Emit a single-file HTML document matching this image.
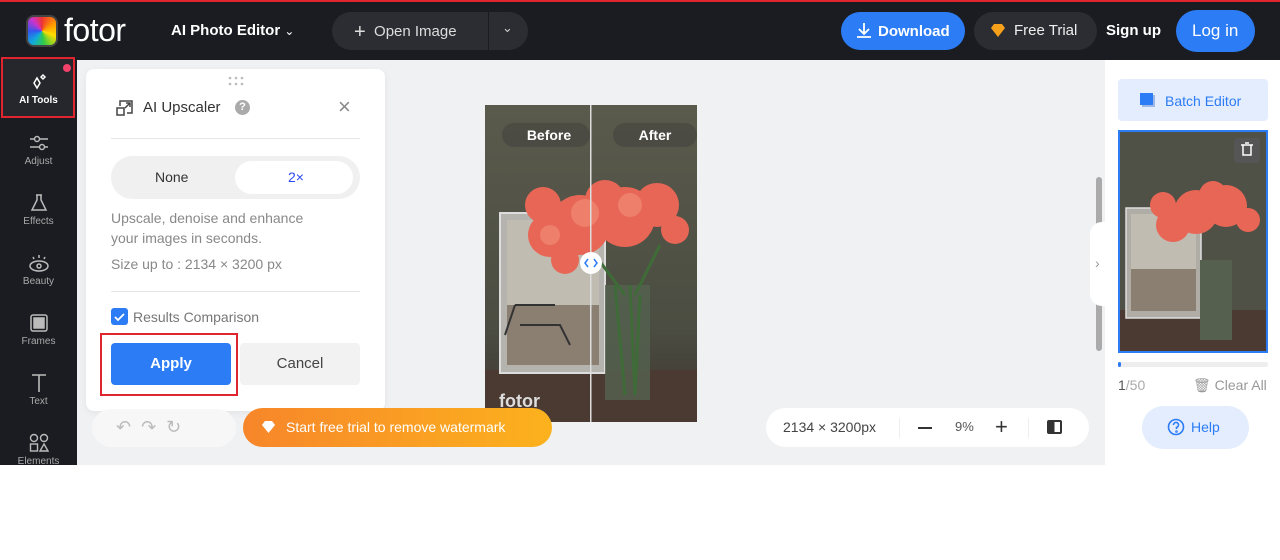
<!DOCTYPE html>
<html><head><meta charset="utf-8"><style>
*{margin:0;padding:0;box-sizing:border-box}
body{width:1280px;height:560px;background:#fff;font-family:"Liberation Sans",sans-serif;position:relative;overflow:hidden}
.a{position:absolute}
.top{left:0;top:0;width:1280px;height:60px;background:#1b1c21;border-top:2px solid #e0252e}
.side{left:0;top:60px;width:77px;height:405px;background:#1b1c21}
.canvas{left:77px;top:60px;width:1028px;height:405px;background:#f0f1f3}
.right{left:1105px;top:60px;width:175px;height:405px;background:#fff}
.w{color:#fff}
.si{position:absolute;left:0;width:77px;text-align:center;color:#aaa;font-size:10px}
.si svg{display:block;margin:0 auto 3px}
</style></head><body>
<div class="a top"></div>
<div class="a" style="left:26px;top:15px;width:32px;height:32px;border-radius:8px;background:conic-gradient(#e33 0deg,#f90 60deg,#fd0 110deg,#3c4 170deg,#1ad 220deg,#35e 270deg,#c3c 320deg,#e33 360deg);border:2px solid #444"></div>
<div class="a w" style="left:64px;top:12px;font-size:32px;letter-spacing:-0.5px">fotor</div>
<div class="a w" style="left:171px;top:22px;font-size:15px;font-weight:bold">AI Photo Editor <span style="font-weight:normal;font-size:12px">&#8964;</span></div>
<div class="a" style="left:332px;top:12px;width:196px;height:38px;border-radius:19px;background:#2c2d32"></div>
<div class="a" style="left:488px;top:12px;width:1px;height:38px;background:#1b1c21"></div>
<div class="a" style="left:354px;top:21px;color:#ddd;font-size:15px"><span style="font-size:20px;vertical-align:-2px">+</span>&nbsp; Open Image</div>
<div class="a" style="left:502px;top:20px;color:#ccc;font-size:13px">&#8964;</div>
<div class="a" style="left:841px;top:12px;width:124px;height:38px;border-radius:19px;background:#2c7cf6"></div>
<svg class="a" style="left:855px;top:21px" width="18" height="18" viewBox="0 0 18 18" fill="none" stroke="#fff" stroke-width="1.8"><path d="M9 2v11M4 8l5 5 5-5M2 16h14"/></svg>
<div class="a w" style="left:878px;top:23px;font-size:15px;font-weight:bold">Download</div>
<div class="a" style="left:974px;top:12px;width:123px;height:38px;border-radius:19px;background:#2c2d32"></div>
<svg class="a" style="left:990px;top:24px" width="16" height="14"><path d="M1 4L4 0h8l3 4-7 9z" fill="#f7a11a"/></svg>
<div class="a" style="left:1014px;top:22px;color:#eee;font-size:15px">Free Trial</div>
<div class="a w" style="left:1106px;top:22px;font-size:15px;font-weight:bold">Sign up</div>
<div class="a" style="left:1176px;top:10px;width:79px;height:42px;border-radius:21px;background:#2c7cf6"></div>
<div class="a w" style="left:1192px;top:21px;font-size:17px">Log in</div>

<div class="a side"></div>
<div class="a" style="left:1px;top:57px;width:74px;height:61px;border:2px solid #e0252e;background:#26272c"></div>
<div class="a" style="left:63px;top:64px;width:8px;height:8px;border-radius:50%;background:#f0426a"></div>
<div class="si" style="top:72px;color:#fff;font-weight:bold"><svg width="20" height="20" viewBox="0 0 20 20" fill="none" stroke="#fff" stroke-width="1.5"><path d="M8 6l3 5-3 5-3-5z"/><path d="M14 3l2 2-2 2-2-2z"/></svg>AI Tools</div>
<div class="si" style="top:133px"><svg width="20" height="20" fill="none" stroke="#bbb" stroke-width="1.5"><path d="M1 6h18M1 14h18"/><circle cx="8" cy="6" r="2.5" fill="#1b1c21"/><circle cx="13" cy="14" r="2.5" fill="#1b1c21"/></svg>Adjust</div>
<div class="si" style="top:193px"><svg width="20" height="20" fill="none" stroke="#bbb" stroke-width="1.5"><path d="M7 2h6M8 2v5L3 17h14L12 7V2"/></svg>Effects</div>
<div class="si" style="top:253px"><svg width="22" height="20" fill="none" stroke="#bbb" stroke-width="1.5"><ellipse cx="11" cy="13" rx="9" ry="5"/><circle cx="11" cy="13" r="2"/><path d="M11 2v3M5 4l1 2M17 4l-1 2"/></svg>Beauty</div>
<div class="si" style="top:313px"><svg width="20" height="20" fill="none" stroke="#bbb" stroke-width="1.5"><rect x="2" y="2" width="16" height="16" rx="2"/><rect x="5" y="5" width="10" height="10" fill="#bbb"/></svg>Frames</div>
<div class="si" style="top:373px"><svg width="20" height="20" fill="none" stroke="#bbb" stroke-width="1.6"><path d="M3 2h14M10 2v17"/></svg>Text</div>
<div class="si" style="top:433px"><svg width="20" height="20" fill="none" stroke="#bbb" stroke-width="1.4"><circle cx="5" cy="5" r="3.5"/><circle cx="15" cy="5" r="3.5"/><rect x="1.5" y="11" width="7" height="7"/><path d="M15 11l4 7h-8z"/></svg>Elements</div>

<div class="a canvas"></div>
<div class="a right"></div>

<svg class="a" style="left:485px;top:105px" width="212" height="317" viewBox="0 0 212 317">
<defs><linearGradient id="bg" x1="0" y1="0" x2="0" y2="1"><stop offset="0" stop-color="#5a5a4c"/><stop offset=".7" stop-color="#4b4d42"/><stop offset="1" stop-color="#3e3630"/></linearGradient></defs>
<rect width="212" height="317" fill="url(#bg)"/>
<rect x="0" y="265" width="212" height="52" fill="#4a3a32"/>
<rect x="15" y="108" width="105" height="160" fill="#b5b3ad" stroke="#ddd" stroke-width="2"/>
<rect x="22" y="115" width="92" height="85" fill="#c0bcb2"/>
<rect x="22" y="200" width="92" height="60" fill="#8b7f72"/>
<path d="M30 200h40M30 200l-10 30M35 220h40l10 20" stroke="#333" stroke-width="2" fill="none"/>
<rect x="120" y="180" width="45" height="115" fill="#55604f" opacity=".85"/>
<path d="M130 180l10 110M145 180l5 110M155 190l-5 100M110 150l30 40M175 140l-25 50" stroke="#3f6b38" stroke-width="3"/>
<g fill="#e86655"><circle cx="65" cy="130" r="22"/><circle cx="95" cy="120" r="30"/><circle cx="140" cy="112" r="30"/><circle cx="172" cy="100" r="22"/><circle cx="58" cy="100" r="18"/><circle cx="190" cy="125" r="14"/><circle cx="80" cy="155" r="14"/><circle cx="120" cy="95" r="20"/></g>
<g fill="#f08a75" opacity=".7"><circle cx="100" cy="108" r="14"/><circle cx="145" cy="100" r="12"/><circle cx="65" cy="130" r="10"/></g>
<rect x="17" y="18" width="88" height="24" rx="12" fill="#4a4a42" opacity=".9"/>
<rect x="128" y="18" width="84" height="24" rx="12" fill="#4a4a42" opacity=".9"/>
<text x="64" y="35" fill="#fff" font-size="14" font-weight="bold" text-anchor="middle" font-family="Liberation Sans">Before</text>
<text x="170" y="35" fill="#fff" font-size="14" font-weight="bold" text-anchor="middle" font-family="Liberation Sans">After</text>
<rect x="105" y="0" width="1.5" height="317" fill="#ddd"/>
<circle cx="106" cy="158" r="11" fill="#fff"/>
<path d="M103 154l-3 4 3 4M109 154l3 4-3 4" stroke="#2c7cf6" stroke-width="1.5" fill="none"/>
<text x="14" y="302" fill="#ddd" font-size="18" font-weight="bold" font-family="Liberation Sans">fotor</text>
</svg>

<div class="a" style="left:86px;top:69px;width:299px;height:342px;background:#fff;border-radius:8px;box-shadow:0 2px 8px rgba(0,0,0,.06)"></div>
<svg class="a" style="left:228px;top:76px" width="16" height="10" fill="#bbb"><circle cx="2" cy="2" r="1.3"/><circle cx="8" cy="2" r="1.3"/><circle cx="14" cy="2" r="1.3"/><circle cx="2" cy="8" r="1.3"/><circle cx="8" cy="8" r="1.3"/><circle cx="14" cy="8" r="1.3"/></svg>
<svg class="a" style="left:116px;top:99px" width="18" height="18" fill="none" stroke="#444" stroke-width="1.5"><rect x="1" y="9" width="7" height="7"/><path d="M4 7V2h12v12h-5M9 9l5-5M10 4h4v4"/></svg>
<div class="a" style="left:143px;top:99px;font-size:15px;color:#333">AI Upscaler</div>
<div class="a" style="left:235px;top:100px;width:15px;height:15px;border-radius:50%;background:#aaa;color:#fff;font-size:11px;font-weight:bold;text-align:center;line-height:15px">?</div>
<div class="a" style="left:338px;top:94px;color:#888;font-size:22px">&#215;</div>
<div class="a" style="left:111px;top:138px;width:249px;height:1px;background:#e5e5e5"></div>
<div class="a" style="left:111px;top:156px;width:249px;height:43px;border-radius:22px;background:#f0f0f0"></div>
<div class="a" style="left:235px;top:161px;width:118px;height:33px;border-radius:17px;background:#fff"></div>
<div class="a" style="left:155px;top:169px;font-size:14px;color:#333">None</div>
<div class="a" style="left:288px;top:169px;font-size:14px;color:#2c48f0">2×</div>
<div class="a" style="left:111px;top:208px;font-size:14px;color:#888;line-height:20px">Upscale, denoise and enhance<br>your images in seconds.</div>
<div class="a" style="left:111px;top:256px;font-size:14px;color:#888">Size up to : 2134 × 3200 px</div>
<div class="a" style="left:111px;top:291px;width:249px;height:1px;background:#e5e5e5"></div>
<div class="a" style="left:111px;top:308px;width:17px;height:17px;border-radius:3px;background:#2c7cf6"></div>
<svg class="a" style="left:113px;top:310px" width="13" height="13" fill="none" stroke="#fff" stroke-width="1.8"><path d="M2 7l3 3 6-6"/></svg>
<div class="a" style="left:133px;top:309px;font-size:14px;color:#777">Results Comparison</div>
<div class="a" style="left:100px;top:333px;width:138px;height:63px;border:2px solid #e0252e"></div>
<div class="a" style="left:111px;top:343px;width:120px;height:42px;border-radius:4px;background:#2c7cf6;color:#fff;font-size:15px;font-weight:bold;text-align:center;line-height:42px">Apply</div>
<div class="a" style="left:240px;top:343px;width:120px;height:42px;border-radius:4px;background:#f2f2f2;color:#444;font-size:15px;text-align:center;line-height:42px">Cancel</div>

<div class="a" style="left:92px;top:409px;width:144px;height:38px;border-radius:19px;background:#f7f7f8"></div>
<div class="a" style="left:116px;top:417px;color:#bbb;font-size:18px">&#8630;&nbsp;&nbsp;&#8631;&nbsp;&nbsp;&#8635;</div>
<div class="a" style="left:243px;top:408px;width:309px;height:39px;border-radius:20px;background:linear-gradient(90deg,#f7862a,#fcb21d)"></div>
<svg class="a" style="left:261px;top:421px" width="15" height="13"><path d="M1 4L4 0h7l3 4-6.5 8z" fill="#fff"/></svg>
<div class="a w" style="left:286px;top:419px;font-size:14px">Start free trial to remove watermark</div>
<div class="a" style="left:766px;top:408px;width:323px;height:39px;border-radius:20px;background:#fff"></div>
<div class="a" style="left:783px;top:419px;font-size:14px;color:#444">2134 × 3200px</div>
<div class="a" style="left:899px;top:418px;width:1px;height:20px;background:#eee"></div>
<div class="a" style="left:918px;top:427px;width:14px;height:2px;background:#333"></div>
<div class="a" style="left:955px;top:419px;font-size:13px;color:#555">9%</div>
<div class="a" style="left:995px;top:414px;font-size:22px;color:#333">+</div>
<div class="a" style="left:1028px;top:418px;width:1px;height:20px;background:#eee"></div>
<div class="a" style="left:1047px;top:420px;width:15px;height:14px;border:2px solid #333;border-radius:2px;background:linear-gradient(90deg,#333 50%,#fff 50%)"></div>

<div class="a" style="left:1096px;top:177px;width:6px;height:174px;border-radius:3px;background:#aaa"></div>
<div class="a" style="left:1090px;top:222px;width:16px;height:84px;border-radius:12px 0 0 12px;background:#fff"></div>
<div class="a" style="left:1095px;top:255px;color:#999;font-size:14px">&#8250;</div>

<div class="a" style="left:1118px;top:79px;width:150px;height:42px;border-radius:4px;background:#e3edfd"></div>
<div class="a" style="left:1140px;top:93px;width:13px;height:12px;background:#2c7cf6;box-shadow:2px 2px 0 #9db8e8"></div>
<div class="a" style="left:1165px;top:93px;font-size:14px;color:#2c7cf6">Batch Editor</div>
<svg class="a" style="left:1118px;top:130px" width="150" height="223" viewBox="0 0 150 223">
<rect width="150" height="223" fill="#4f5046"/>
<rect y="180" width="150" height="43" fill="#4a3a32"/>
<rect x="8" y="78" width="75" height="110" fill="#b0ada6" stroke="#ddd" stroke-width="1.5"/>
<rect x="13" y="84" width="65" height="55" fill="#c0bcb2"/>
<rect x="13" y="139" width="65" height="42" fill="#8b7f72"/>
<rect x="82" y="130" width="32" height="80" fill="#55604f"/>
<g fill="#e86655"><circle cx="55" cy="95" r="17"/><circle cx="78" cy="82" r="22"/><circle cx="108" cy="76" r="21"/><circle cx="45" cy="75" r="13"/><circle cx="130" cy="90" r="12"/><circle cx="95" cy="65" r="14"/></g>
<rect x="1" y="1" width="148" height="221" fill="none" stroke="#2c7cf6" stroke-width="2"/>
<rect x="116" y="8" width="26" height="25" rx="4" fill="#555"/>
<path d="M123 15h12M125 15v10h8V15M127 13h4" stroke="#fff" stroke-width="1.5" fill="none"/>
</svg>
<div class="a" style="left:1118px;top:362px;width:150px;height:5px;border-radius:3px;background:#eee"></div>
<div class="a" style="left:1118px;top:362px;width:3px;height:5px;border-radius:2px;background:#2c7cf6"></div>
<div class="a" style="left:1118px;top:377px;font-size:14px;color:#aaa"><span style="color:#555">1</span>/50</div>
<div class="a" style="left:1193px;top:377px;font-size:14px;color:#999">&#128465; Clear All</div>
<div class="a" style="left:1142px;top:406px;width:107px;height:43px;border-radius:22px;background:#e3edfd"></div>
<svg class="a" style="left:1167px;top:418px" width="18" height="18" fill="none" stroke="#2c7cf6" stroke-width="1.6"><circle cx="9" cy="9" r="7.5"/><path d="M6.5 7a2.5 2.5 0 1 1 3 2.4V11"/><circle cx="9.5" cy="13.5" r=".5"/></svg>
<div class="a" style="left:1191px;top:419px;font-size:14px;color:#2c7cf6">Help</div>
</body></html>
